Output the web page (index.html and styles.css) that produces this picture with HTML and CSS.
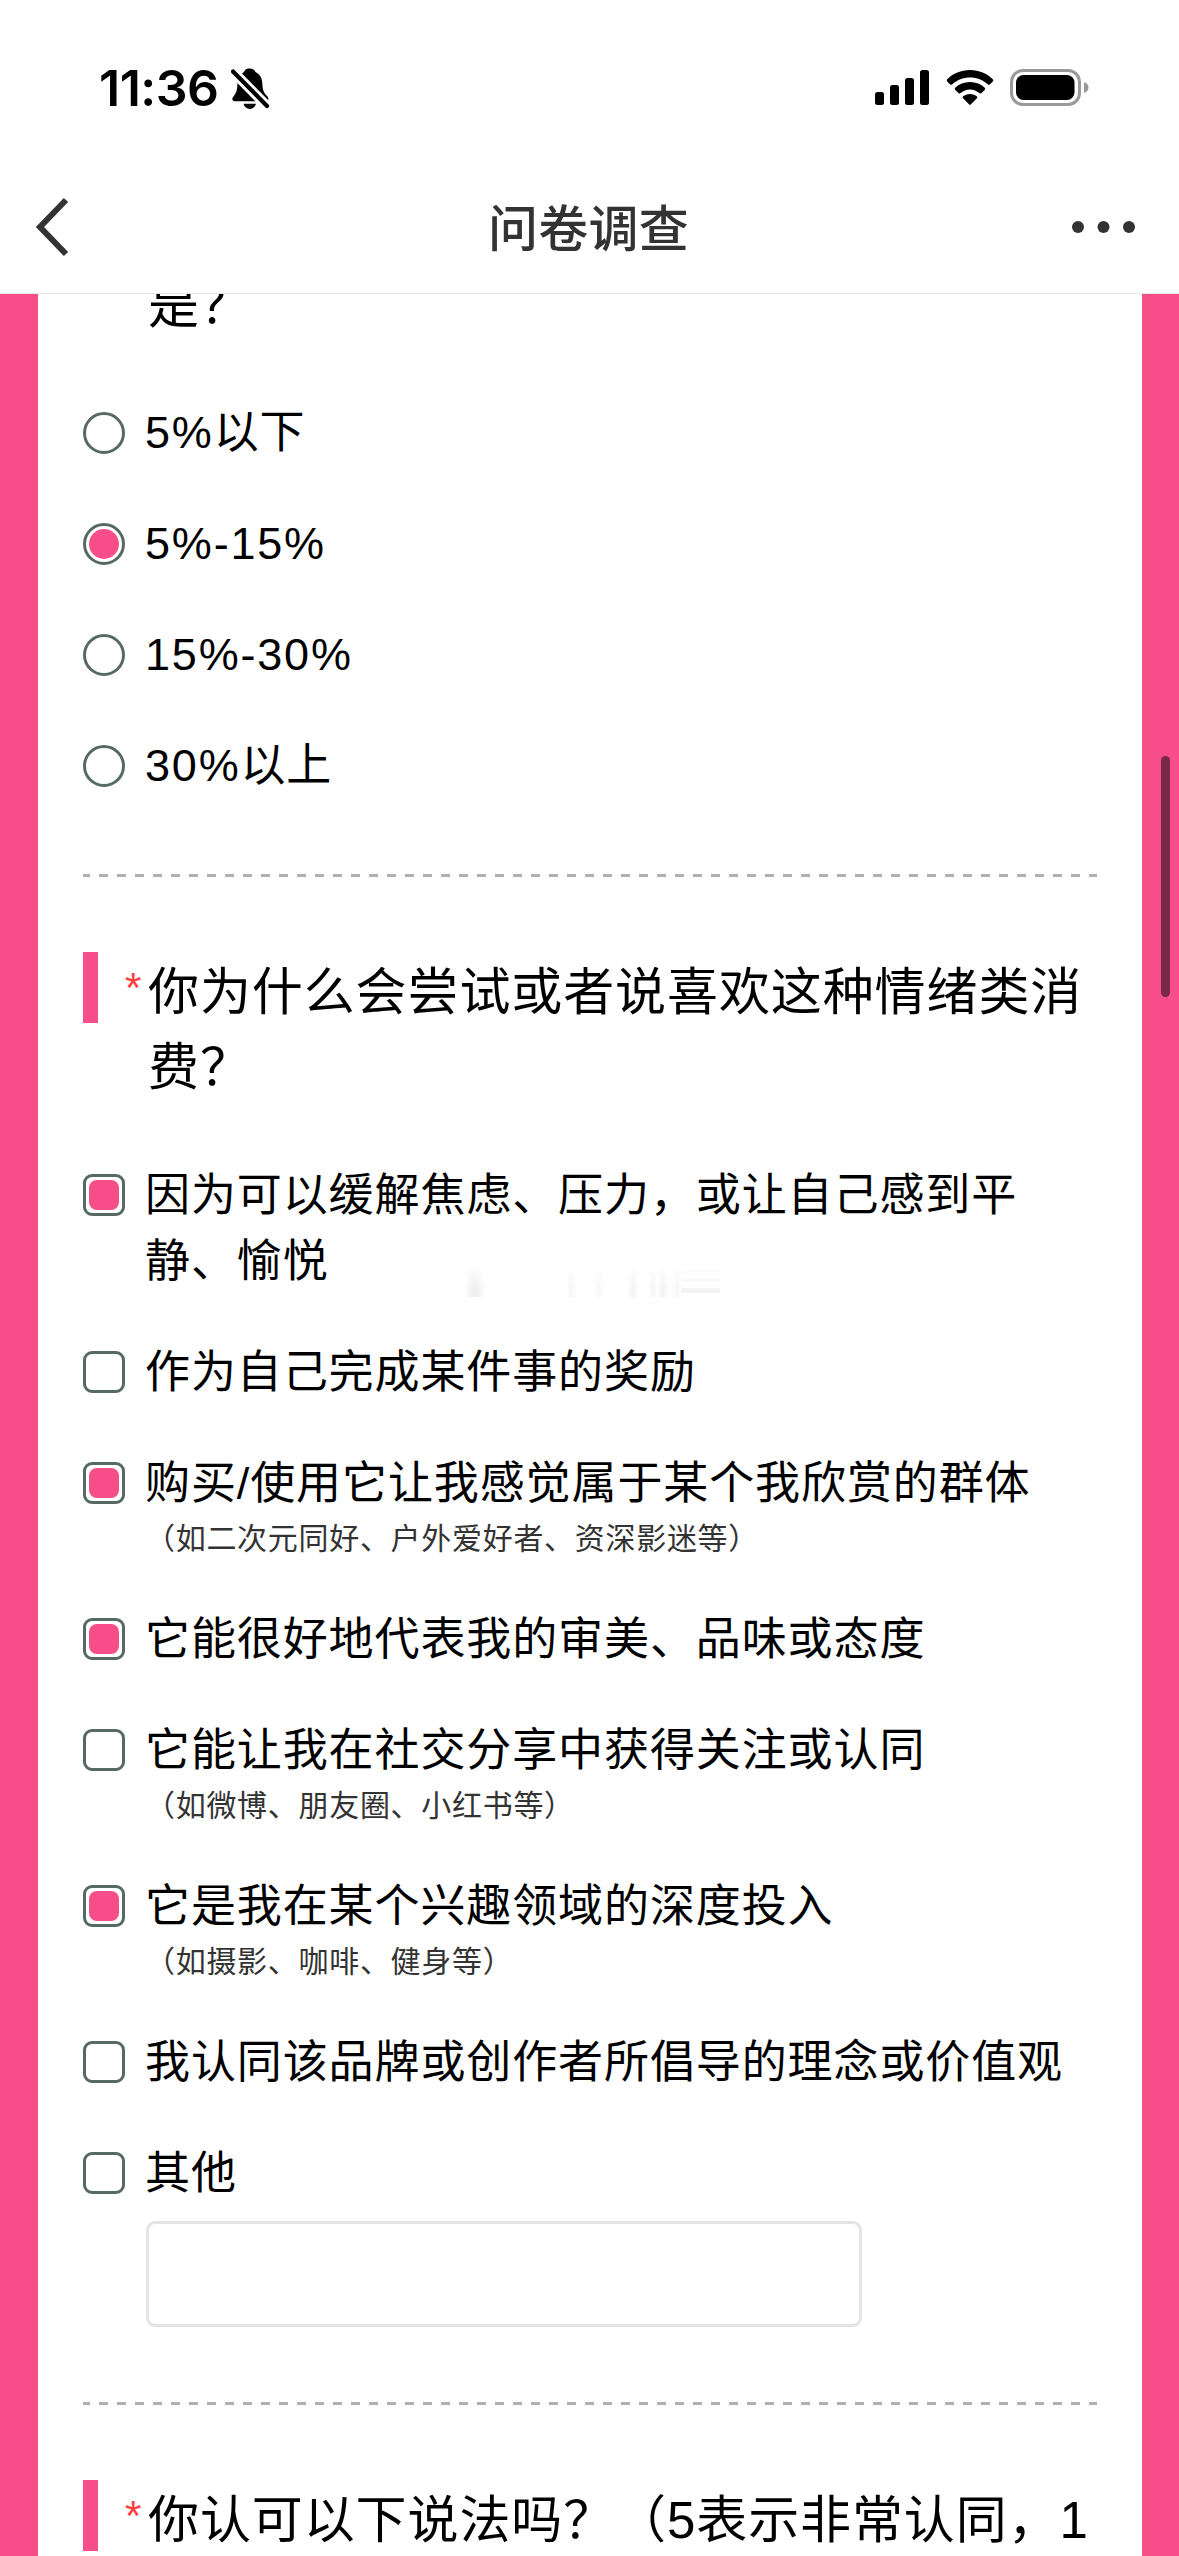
FILE: index.html
```html
<!DOCTYPE html>
<html lang="zh-CN">
<head>
<meta charset="utf-8">
<title>问卷调查</title>
<link rel="stylesheet" href="styles.css">
</head>
<body>
<div class="screen">
  <header class="top">
    <div class="status">
      <div class="clock">
        <span class="time">11:36</span>
        <svg class="bell" width="40" height="42" viewBox="0 0 40 42">
          <path d="M18.500 .5C22 .5 23.500 2 24.500 4C29 6.500 31 10 31.300 15C31.600 22 32.500 24.500 36.500 28.500C38 30.500 37.500 33.300 35 33.300H4C1 33.300 .5 30.500 2.500 28.500C5.500 24.500 6.200 22 6.500 15C6.800 10 9 6.500 13 4C14 2 15 .5 18.500 .5Z"/>
          <path d="M12.500 35.800H25C24 39 22 41 18.800 41C15.500 41 13.500 39 12.500 35.800Z"/>
          <path class="bell-gap" d="M1 2.500L36.500 38.500"/>
          <path class="bell-slash" d="M2 3.500L36 38"/>
        </svg>
      </div>
      <div class="indicators">
        <svg width="54" height="36" viewBox="0 0 54 36">
          <rect x="0" y="22" width="9" height="13" rx="2.500"/>
          <rect x="15" y="15" width="9" height="20" rx="2.500"/>
          <rect x="30" y="8" width="9" height="27" rx="2.500"/>
          <rect x="45" y="0" width="9" height="35" rx="2.500"/>
        </svg>
        <svg class="wifi" width="48" height="36" viewBox="0 0 48 36">
          <path d="M24 0C33 0 41 3.500 46.800 9.200Q47.800 10.300 46.800 11.400L43.800 14.400Q42.800 15.300 41.700 14.300C37 10 31 7.400 24 7.400S11 10 6.300 14.300Q5.200 15.300 4.200 14.400L1.200 11.400Q.2 10.300 1.200 9.200C7 3.500 15 0 24 0Z"/>
          <path d="M24 12C30 12 35 14.200 38.800 17.800Q39.800 18.900 38.700 20L35.500 23Q34.500 24 33.400 23.100C30.800 20.800 27.600 19.400 24 19.400S17.200 20.800 14.600 23.100Q13.500 24 12.500 23L9.300 20Q8.200 18.900 9.200 17.800C13 14.200 18 12 24 12Z"/>
          <path d="M24 24C27 24 29.300 25 31 26.500Q31.800 27.400 30.900 28.300L25 34.300Q24 35.300 23 34.300L17.100 28.300Q16.200 27.400 17 26.500C18.700 25 21 24 24 24Z"/>
        </svg>
        <svg class="battery" width="80" height="37" viewBox="0 0 80 37">
          <rect class="shell" x="1.500" y="1.500" width="68" height="34" rx="11.500"/>
          <rect x="6" y="6" width="58.500" height="25" rx="7.500"/>
          <path class="cap" d="M74 13C77 14 78.500 16 78.500 18.500S77 23 74 24Z"/>
        </svg>
      </div>
    </div>
    <nav class="navbar">
      <svg class="back" width="36" height="60" viewBox="0 0 36 60"><path d="M31 3L5 30L31 57"/></svg>
      <h1 class="page-title">问卷调查</h1>
      <svg class="more" width="64" height="12" viewBox="0 0 64 12"><circle cx="6" cy="6" r="6"/><circle cx="31.500" cy="6" r="6"/><circle cx="57" cy="6" r="6"/></svg>
    </nav>
  </header>

  <main class="page">
    <div class="sheet">
      <section class="question previous">
        <h2 class="title"><span class="mark"></span><span class="star"></span><span class="title-text">是？</span></h2>
        <ul class="options">
          <li class="option"><span class="box radio"></span><div class="label"><span class="n">5%</span>以下</div></li>
          <li class="option"><span class="box radio checked"></span><div class="label"><span class="n">5%-15%</span></div></li>
          <li class="option"><span class="box radio"></span><div class="label"><span class="n">15%-30%</span></div></li>
          <li class="option"><span class="box radio"></span><div class="label"><span class="n">30%</span>以上</div></li>
        </ul>
      </section>
      <div class="divider"></div>
      <section class="question">
        <h2 class="title"><span class="mark bar"></span><span class="star">*</span><span class="title-text">你为什么会尝试或者说喜欢这种情绪类消费？</span></h2>
        <ul class="options shifted">
          <li class="option"><span class="box checked"></span><div class="label">因为可以缓解焦虑、压力，或让自己感到平静、愉悦</div><div class="smudge"></div></li>
          <li class="option"><span class="box"></span><div class="label">作为自己完成某件事的奖励</div></li>
          <li class="option"><span class="box checked"></span><div class="label">购买/使用它让我感觉属于某个我欣赏的群体<p class="note">（如二次元同好、户外爱好者、资深影迷等）</p></div></li>
          <li class="option"><span class="box checked"></span><div class="label">它能很好地代表我的审美、品味或态度</div></li>
          <li class="option"><span class="box"></span><div class="label">它能让我在社交分享中获得关注或认同<p class="note">（如微博、朋友圈、小红书等）</p></div></li>
          <li class="option"><span class="box checked"></span><div class="label">它是我在某个兴趣领域的深度投入<p class="note">（如摄影、咖啡、健身等）</p></div></li>
          <li class="option"><span class="box"></span><div class="label">我认同该品牌或创作者所倡导的理念或价值观</div></li>
          <li class="option"><span class="box"></span><div class="label">其他<input class="other" type="text" aria-label="其他"></div></li>
        </ul>
      </section>
      <div class="divider"></div>
      <section class="question">
        <h2 class="title"><span class="mark bar"></span><span class="star">*</span><span class="title-text">你认可以下说法吗？（5表示非常认同，1</span></h2>
      </section>
    </div>
    <div class="scroll-thumb"></div>
  </main>
</div>
</body>
</html>
```
FILE: styles.css
```css
* { box-sizing: border-box; }

body {
  margin: 0;
  background: #fff;
  color: #000;
  font-family: "Liberation Sans", "Noto Sans CJK SC", sans-serif;
}

.screen {
  display: flex;
  flex-direction: column;
  width: 1179px;
  height: 2556px;
  overflow: hidden;
}

/* status bar and navigation */
.top {
  flex: none;
  height: 294px;
  border-bottom: 1px solid #e2e6e5;
  background: #fff;
}

.status {
  display: flex;
  justify-content: space-between;
  align-items: flex-start;
  height: 160px;
  padding: 68px 89px 0 99px;
}

.clock { display: flex; gap: 12px; }

.time {
  width: 120px;
  height: 40px;
  font: 600 50px/41px Inter, sans-serif;
  letter-spacing: -0.500px;
  white-space: nowrap;
}

.bell-gap { stroke: #fff; stroke-width: 10; }
.bell-slash { stroke: #000; stroke-width: 4.200; stroke-linecap: round; }

.indicators { display: flex; padding-top: 2px; }
.wifi { margin-left: 17px; }
.battery { margin: -1px 0 0 16px; }
.shell { fill: none; stroke: #999; stroke-width: 3; }
.cap { fill: #999; }

.navbar {
  display: flex;
  align-items: center;
  justify-content: space-between;
  height: 133px;
  padding: 0 44px 0 35px;
}

.back { margin-right: 20px; fill: none; stroke: #333; stroke-width: 6; }
.more { margin-right: -1px; fill: #333; }

.page-title {
  margin: 0;
  padding: 7px 0 0 14px;
  color: #333;
  font-size: 50px;
  font-weight: 500;
  line-height: 75px;
  letter-spacing: 0.300px;
}

/* survey */
.page {
  flex: 1;
  position: relative;
  min-height: 0;
  padding: 0 37px 0 38px;
  overflow: hidden;
  background: #f74e8a;
}

.sheet {
  height: 100%;
  padding: 0 45px;
  overflow: hidden;
  background: #fff;
}

.question { padding-top: 75px; }
.previous { margin-top: -104px; }

.title {
  display: flex;
  margin: 0 0 57px;
  font-size: 51px;
  font-weight: 400;
  line-height: 75px;
  letter-spacing: 0.900px;
}

.mark { flex: none; width: 15px; height: 71px; }
.bar { background: #f74e8a; }

.star {
  flex: none;
  width: 50px;
  height: 75px;
  padding-left: 27px;
  color: #ff4040;
  font-size: 42px;
  line-height: 71px;
}

.title-text { flex: 1; padding-top: 3px; }

.options {
  display: flex;
  flex-direction: column;
  gap: 45px;
  margin: 0;
  padding: 0;
  list-style: none;
}

.option {
  position: relative;
  display: flex;
  gap: 20px;
  font-size: 45px;
  line-height: 66px;
  letter-spacing: 0.900px;
}

.box {
  flex: none;
  display: grid;
  place-items: center;
  width: 42px;
  height: 42px;
  margin-top: 12px;
  border: 3px solid #566963;
  border-radius: 9px;
}

.box.checked::after {
  content: "";
  width: 30px;
  height: 30px;
  border-radius: 8px;
  background: #f74e8a;
}

.radio, .radio.checked::after { border-radius: 50%; }

.label { flex: 1; }
.shifted .label { padding-top: 1px; margin-bottom: -1px; }
.n { letter-spacing: 1.800px; }

.note {
  height: 45px;
  margin: 0;
  color: #333;
  font-size: 30px;
  line-height: 44px;
  letter-spacing: 0.700px;
}

.other {
  display: block;
  width: 716px;
  height: 106px;
  margin: 14px 0 1px 1px;
  border: 3px solid #e4e4e4;
  border-radius: 9px;
  background: #fff;
}

.divider {
  height: 3px;
  margin-top: 75px;
  background: repeating-linear-gradient(90deg, #b0b0b0 0 9px, transparent 9px 18px) -1.500px 0 / 1080px 3px;
}

/* faint residue beside the first option */
.smudge {
  position: absolute;
  left: 382px;
  top: 104px;
  width: 256px;
  height: 31px;
  background:
    linear-gradient(#f4f4f4, #f4f4f4) 216px 3px / 39px 5px no-repeat,
    linear-gradient(#f6f6f6, #f6f6f6) 216px 12px / 39px 4px no-repeat,
    linear-gradient(#f3f3f3, #f3f3f3) 216px 22px / 39px 5px no-repeat,
    linear-gradient(90deg, transparent 0, #efefef 8px, #efefef 12px, transparent 20px, transparent 102px, #f6f6f6 106px, transparent 112px, transparent 128px, #f8f8f8 134px, transparent 139px, transparent 162px, #f4f4f4 168px, transparent 173px, transparent 183px, #f5f5f5 188px, transparent 192px, #f2f2f2 198px, transparent 204px, #f8f8f8 212px, transparent 217px);
  -webkit-mask-image: linear-gradient(transparent, #000 70%);
  mask-image: linear-gradient(transparent, #000 70%);
}

.scroll-thumb {
  position: absolute;
  right: 9px;
  top: 462px;
  width: 9px;
  height: 241px;
  border-radius: 5px;
  background: #792848;
}
```
